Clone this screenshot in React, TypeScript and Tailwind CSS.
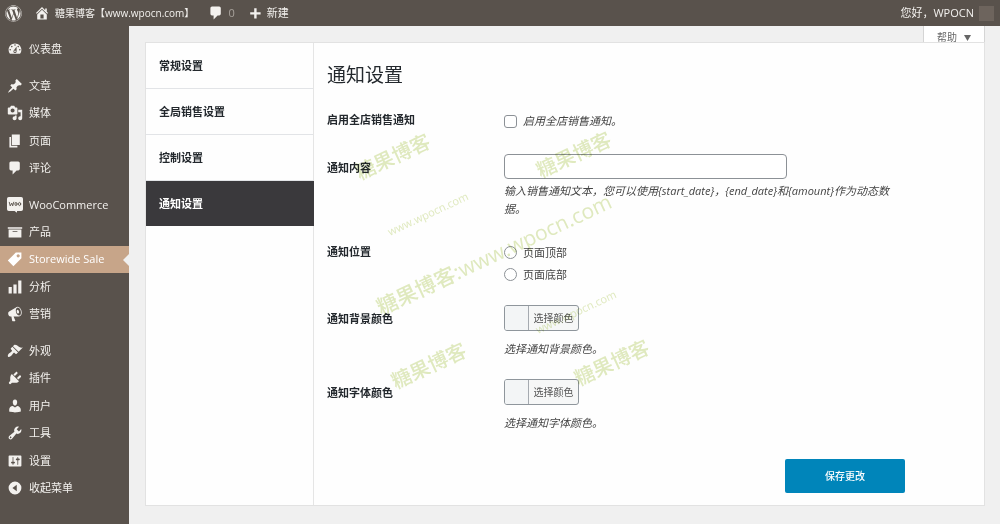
import type { ReactNode } from "react";
import { FaWordpress } from "react-icons/fa";

const icons = {
  dashboard:
    "M3.76 16h12.48c1.1-1.37 1.76-3.11 1.76-5 0-4.42-3.58-8-8-8s-8 3.58-8 8c0 1.89.66 3.63 1.76 5zM10 4c.55 0 1 .45 1 1s-.45 1-1 1-1-.45-1-1 .45-1 1-1zM6 6c.55 0 1 .45 1 1s-.45 1-1 1-1-.45-1-1 .45-1 1-1zm8 0c.55 0 1 .45 1 1s-.45 1-1 1-1-.45-1-1 .45-1 1-1zm-5.37 5.55L12 7v6c0 1.1-.9 2-2 2s-2-.9-2-2c0-.57.24-1.08.63-1.45zM4 10c.55 0 1 .45 1 1s-.45 1-1 1-1-.45-1-1 .45-1 1-1zm12 0c.55 0 1 .45 1 1s-.45 1-1 1-1-.45-1-1 .45-1 1-1zm-5 3c0-.55-.45-1-1-1s-1 .45-1 1 .45 1 1 1 1-.45 1-1z",
  post: "M10.44 3.02l1.82-1.82 6.36 6.35-1.83 1.82c-1.05-.68-2.48-.57-3.41.36l-.75.75c-.92.93-1.04 2.35-.35 3.41l-1.83 1.82-2.41-2.41-2.8 2.79c-.42.42-3.38 2.71-3.8 2.29s1.86-3.39 2.28-3.81l2.79-2.79L4.1 9.36l1.83-1.82c1.05.69 2.48.57 3.4-.36l.75-.75c.93-.92 1.05-2.35.36-3.41z",
  media:
    "M13 11V4c0-.55-.45-1-1-1h-1.67L9 1H5L3.67 3H2c-.55 0-1 .45-1 1v7c0 .55.45 1 1 1h10c.55 0 1-.45 1-1zM7 4.5c1.38 0 2.5 1.12 2.5 2.5S8.38 9.5 7 9.5 4.5 8.38 4.5 7 5.62 4.5 7 4.5zM14 6h5v10.5c0 1.38-1.12 2.5-2.5 2.5S14 17.88 14 16.5s1.12-2.5 2.5-2.5c.17 0 .34.02.5.05V9h-3V6zm-4 8.05V13h2v3.5c0 1.38-1.12 2.5-2.5 2.5S7 17.88 7 16.5 8.12 14 9.5 14c.17 0 .34.02.5.05z",
  page: "M6 15V2h10v13H6zm-1 1h8v2H3V5h2v11z",
  comments:
    "M5 2h9c1.1 0 2 .9 2 2v7c0 1.1-.9 2-2 2h-2l-5 5v-5H5c-1.1 0-2-.9-2-2V4c0-1.1.9-2 2-2z",
  archive: "M19 4v2H1V4h18zM2 7h16v10H2V7zm11 3V9H7v1h6z",
  tag: "M11 2h7v7L8 19l-7-7zm3 6c1.1 0 2-.9 2-2s-.9-2-2-2-2 .9-2 2 .9 2 2 2z",
  chart: "M18 18V2h-4v16h4zm-6 0V7H8v11h4zm-6 0v-8H2v8h4z",
  megaphone:
    "M18.15 5.94c.46 1.62.38 3.22-.02 4.48-.42 1.28-1.26 2.18-2.3 2.48-.16.06-.26.06-.4.06-.06.02-.12.02-.18.02-.06.02-.14.02-.22.02h-6.8l2.22 5.5c.02.14-.06.26-.14.34-.08.1-.24.16-.34.16H6.95c-.1 0-.26-.06-.34-.16-.08-.08-.16-.2-.14-.34l-1-5.5H4.25l-.02-.02c-.5.06-1.08-.18-1.54-.62s-.88-1.08-1.06-1.88c-.24-.8-.2-1.56-.02-2.2.18-.62.58-1.08 1.06-1.3l.02-.02 9-5.4c.1-.06.18-.1.24-.16.06-.04.14-.08.24-.12.16-.08.28-.12.5-.18 1.04-.3 2.24.1 3.22.98s1.84 2.24 2.26 3.86zm-2.58 5.98h-.02c.4-.1.74-.34 1.04-.7.58-.7.86-1.76.86-3.04 0-.64-.1-1.3-.28-1.98-.34-1.36-1.02-2.5-1.78-3.24s-1.68-1.1-2.46-.88c-.82.22-1.4.96-1.7 2-.32 1.04-.28 2.36.06 3.72.38 1.36 1 2.5 1.8 3.24.78.74 1.62 1.1 2.48.88zm-2.54-7.08c.22-.04.42-.02.62.04.38.16.76.48 1.02 1s.42 1.2.42 1.78c0 .3-.04.56-.12.8-.18.48-.44.84-.86.94-.34.1-.8-.06-1.14-.4s-.64-.86-.78-1.5c-.18-.62-.12-1.24.02-1.72s.48-.84.82-.94z",
  appearance:
    "M14.48 11.06L7.41 3.99l1.5-1.5c.5-.56 2.3-.47 3.51.32 1.21.8 1.43 1.28 2.91 2.1 1.18.64 2.45 1.26 4.45.85zm-.71.71L6.7 4.7 4.93 6.47c-.39.39-.39 1.02 0 1.41l1.06 1.06c.39.39.39 1.03 0 1.42-.6.6-1.43 1.11-2.21 1.69-.35.26-.7.53-1.01.84C1.43 14.23.4 16.08 1.4 17.07c.99 1 2.84-.03 4.18-1.36.31-.31.58-.66.85-1.02.57-.78 1.08-1.61 1.69-2.21.39-.39 1.02-.39 1.41 0l1.06 1.06c.39.39 1.02.39 1.41 0z",
  plugins:
    "M13.11 4.36L9.87 7.6 8 5.73l3.24-3.24c.35-.34 1.05-.2 1.56.32.52.51.66 1.21.31 1.55zm-8 1.77l.91-1.12 9.01 9.01-1.19.84c-.71.71-2.63 1.16-3.82 1.16H6.14L4.9 17.26c-.59.59-1.54.59-2.12 0-.59-.58-.59-1.53 0-2.12l1.24-1.24v-3.88c0-1.13.4-3.19 1.09-3.89zm7.26 3.97l3.24-3.24c.34-.35 1.04-.21 1.55.31.52.51.66 1.21.31 1.55l-3.24 3.25z",
  users:
    "M10 9.25c-2.27 0-2.73-3.44-2.73-3.44C7 4.02 7.82 2 9.97 2c2.16 0 2.98 2.02 2.71 3.81 0 0-.41 3.44-2.68 3.44zm0 2.57L12.72 10c2.39 0 4.52 2.33 4.52 4.53v2.49s-3.65 1.13-7.24 1.13c-3.65 0-7.24-1.13-7.24-1.13v-2.49c0-2.25 1.94-4.48 4.47-4.48z",
  tools:
    "M16.68 9.77c-1.34 1.34-3.3 1.67-4.95.99l-5.41 6.52c-.99.99-2.59.99-3.58 0s-.99-2.59 0-3.57l6.52-5.42c-.68-1.65-.35-3.61.99-4.95 1.28-1.28 3.12-1.62 4.72-1.06l-2.89 2.89 2.82 2.82 2.86-2.87c.53 1.58.18 3.39-1.08 4.65zM3.81 16.21c.4.39 1.04.39 1.43 0 .4-.4.4-1.04 0-1.43-.39-.4-1.03-.4-1.43 0-.39.39-.39 1.03 0 1.43z",
  settings:
    "M18 16V4c0-.55-.45-1-1-1H3c-.55 0-1 .45-1 1v12c0 .55.45 1 1 1h14c.55 0 1-.45 1-1zM8 11h1c.55 0 1 .45 1 1s-.45 1-1 1H8v1.5c0 .28-.22.5-.5.5s-.5-.22-.5-.5V13H6c-.55 0-1-.45-1-1s.45-1 1-1h1V5.5c0-.28.22-.5.5-.5s.5.22.5.5V11zm5-2h-1c-.55 0-1-.45-1-1s.45-1 1-1h1V5.5c0-.28.22-.5.5-.5s.5.22.5.5V7h1c.55 0 1 .45 1 1s-.45 1-1 1h-1v5.5c0 .28-.22.5-.5.5s-.5-.22-.5-.5V9z",
  collapse: "M10 2a8 8 0 1 0 0 16 8 8 0 0 0 0-16zm2.2 12.2L6.8 10l5.4-4.2z",
  home: "M16 8.5l1.53 1.53-1.06 1.06L10 4.6l-6.47 6.49-1.06-1.06L10 2.5l4 4v-2h2v4zm-6-2.46l6 5.99V18H4v-5.97zM12 17v-5H8v5h4z",
  plus: "M17 9v3h-5v5H9v-5H4V9h5V4h3v5h5z",
};

type IconName = keyof typeof icons;

function Icon({ name }: { name: IconName }) {
  return (
    <svg viewBox="0 0 20 20" className="size-4 shrink-0" fill="currentColor" fillRule="evenodd" aria-hidden="true">
      <path d={icons[name]} />
    </svg>
  );
}

function WooIcon() {
  return (
    <svg viewBox="0 0 16 16" className="size-4 shrink-0" aria-hidden="true">
      <path
        fill="currentColor"
        d="M1.8 0h12.4A1.8 1.8 0 0 1 16 1.8v10.4a1.8 1.8 0 0 1-1.8 1.8H10v1.8L7.600 14H1.800A1.800 1.800 0 0 1 0 12.200V1.800A1.800 1.800 0 0 1 1.800 0z"
      />
      <g fill="none" stroke="#59524c" strokeWidth="0.9" strokeLinejoin="round" strokeLinecap="round">
        <path d="M2.300 5.300l.9 3.600 1.600-2.800.9 2.800 1-3.700" />
        <ellipse cx="9" cy="7" rx="1.100" ry="1.600" />
        <ellipse cx="12.600" cy="7" rx="1.100" ry="1.600" />
      </g>
    </svg>
  );
}

type Item = { label: string; icon: IconName | "woo"; active?: boolean };

const contentItems: Item[] = [
  { label: "文章", icon: "post" },
  { label: "媒体", icon: "media" },
  { label: "页面", icon: "page" },
  { label: "评论", icon: "comments" },
];
const shopItems: Item[] = [
  { label: "WooCommerce", icon: "woo" },
  { label: "产品", icon: "archive" },
  { label: "Storewide Sale", icon: "tag", active: true },
  { label: "分析", icon: "chart" },
  { label: "营销", icon: "megaphone" },
];
const siteItems: Item[] = [
  { label: "外观", icon: "appearance" },
  { label: "插件", icon: "plugins" },
  { label: "用户", icon: "users" },
  { label: "工具", icon: "tools" },
  { label: "设置", icon: "settings" },
];

function MenuItem({ item }: { item: Item }) {
  return (
    <li className="flex">
      <a
        href="#"
        aria-current={item.active ? "page" : undefined}
        className={
          item.active
            ? "relative flex flex-1 items-center gap-[6px] bg-[#c7a589] pl-[7px] text-white"
            : "flex flex-1 items-center gap-[6px] pl-[7px]"
        }
      >
        {item.icon === "woo" ? <WooIcon /> : <Icon name={item.icon} />}
        <span>{item.label}</span>
        {item.active && (
          <svg viewBox="0 0 6 12" className="absolute top-2 right-0 h-3 w-[6px]" aria-hidden="true">
            <path d="M6 0v12L0 6z" fill="#f0f0f0" />
          </svg>
        )}
      </a>
    </li>
  );
}

function Row({ label, htmlFor, className, labelClass, children }: {
  label: string;
  htmlFor?: string;
  className: string;
  labelClass: string;
  children: ReactNode;
}) {
  return (
    <div className={`grid grid-cols-[177px_1fr] items-start ${className}`}>
      <label htmlFor={htmlFor} className={`font-semibold text-[#23282d] ${labelClass}`}>
        {label}
      </label>
      <div>{children}</div>
    </div>
  );
}

function ColorPicker({ id }: { id: string }) {
  return (
    <button
      id={id}
      type="button"
      className="flex h-[26px] w-[75px] overflow-hidden rounded-[3px] border border-[#8f969c] bg-[#f6f7f7] text-[10px] text-[#555]"
    >
      <span className="h-full w-6 border-r border-[#a5aab0] bg-[#f3f5f6]" />
      <span className="flex h-full flex-1 items-center justify-center">选择颜色</span>
    </button>
  );
}

const tabs = ["常规设置", "全局销售设置", "控制设置"];

function Watermarks() {
  const base = "absolute -translate-x-1/2 -translate-y-1/2 -rotate-[25deg] whitespace-nowrap";
  return (
    <div className="pointer-events-none absolute inset-0 overflow-hidden text-[#e0eabf] mix-blend-multiply select-none" aria-hidden="true">
      <span className={`${base} top-[114px] left-[247px] text-[20px] font-medium`}>糖果博客</span>
      <span className={`${base} top-[112px] left-[428px] text-[20px] font-medium`}>糖果博客</span>
      <span className={`${base} top-[171px] left-[282px] text-[11px]`}>www.wpocn.com</span>
      <span className={`${base} top-[211px] left-[348px] text-[21px] font-medium`}>糖果博客:www.wpocn.com</span>
      <span className={`${base} top-[269px] left-[430px] text-[11px]`}>www.wpocn.com</span>
      <span className={`${base} top-[323px] left-[283px] text-[20px] font-medium`}>糖果博客</span>
      <span className={`${base} top-[320px] left-[466px] text-[20px] font-medium`}>糖果博客</span>
    </div>
  );
}

export default function App() {
  return (
    <div className="flex min-h-screen flex-col bg-[#f0f0f0] font-['Open_Sans','Noto_Sans_CJK_SC',sans-serif] text-[11px] leading-[18px] text-[#444]">
      <header className="flex h-[26px] items-center bg-[#59524c] pr-[6px] pl-[5px] text-[#f3f1ee]">
        <a href="#" aria-label="WordPress">
          <FaWordpress className="size-[17px]" />
        </a>
        <a href="#" className="ml-3 flex items-center gap-[5px]">
          <Icon name="home" />
          <span className="text-[10px]">糖果博客【www.wpocn.com】</span>
        </a>
        <a href="#" className="ml-[14px] flex items-center gap-1">
          <Icon name="comments" />
          <span className="text-[#a8a29c]">0</span>
        </a>
        <a href="#" className="ml-3 flex items-center gap-1">
          <Icon name="plus" />
          <span>新建</span>
        </a>
        <a href="#" className="ml-auto flex items-center gap-[5px]">
          <span>您好，WPOCN</span>
          <span className="size-[15px] bg-[#6d645d]" />
        </a>
      </header>

      <div className="flex flex-1">
        <nav className="flex w-[129px] shrink-0 flex-col gap-[9px] bg-[#59524c] pt-[9px] text-[#f3f1ee]" aria-label="主菜单">
          <ul className="grid h-7 auto-rows-fr">
            <MenuItem item={{ label: "仪表盘", icon: "dashboard" }} />
          </ul>
          <ul className="grid h-[110px] auto-rows-fr">
            {contentItems.map((i) => <MenuItem key={i.label} item={i} />)}
          </ul>
          <ul className="grid h-[137px] auto-rows-fr">
            {shopItems.map((i) => <MenuItem key={i.label} item={i} />)}
          </ul>
          <ul className="grid h-[165px] auto-rows-fr">
            {siteItems.map((i) => <MenuItem key={i.label} item={i} />)}
            <li className="flex">
              <button type="button" className="flex flex-1 items-center gap-[6px] pl-[7px]">
                <Icon name="collapse" />
                <span>收起菜单</span>
              </button>
            </li>
          </ul>
        </nav>

        <main className="flex min-w-0 flex-1 flex-col pr-[15px] pb-[19px] pl-4">
          <button
            type="button"
            className="flex h-4 items-start gap-[7px] self-end overflow-hidden border-x border-[#d5d5d5] bg-white px-[13px] pt-[5px] text-[10px] leading-[13px] text-[#666]"
          >
            <span>帮助</span>
            <svg viewBox="0 0 7 6" className="mt-1 h-[6px] w-[7px]" fill="currentColor" aria-hidden="true">
              <path d="M0 0h7L3.500 6z" />
            </svg>
          </button>
          <div className="relative flex flex-1 border border-[#e2e2e2] bg-[#fefefe]">
            <aside className="w-[168px] shrink-0 border-r border-[#e5e5e5]">
              <ul className="font-semibold text-[#23282d]">
                {tabs.map((t) => (
                  <li key={t}>
                    <a href="#" className="flex h-[46px] items-center border-b border-[#e2e4e7] pl-[13px]">{t}</a>
                  </li>
                ))}
                <li>
                  <a href="#" aria-current="page" className="-mr-px flex h-[45px] items-center bg-[#3a393c] pl-[13px] text-white">通知设置</a>
                </li>
              </ul>
            </aside>

            <form className="flex min-w-0 flex-1 flex-col pt-5 pr-[79px] pb-3 pl-[13px]">
              <h1 className="text-[19px] leading-6 text-[#23282d]">通知设置</h1>
              <Row label="启用全店销售通知" htmlFor="enable" className="mt-[23px]" labelClass="pt-px">
                <label className="flex h-[20px] items-center gap-[6px] pt-[2px] italic">
                  <input id="enable" type="checkbox" className="size-[13px] appearance-none rounded-[3px] border border-[#8c9196] bg-white" />
                  <span>启用全店销售通知。</span>
                </label>
              </Row>
              <Row label="通知内容" htmlFor="content" className="mt-6" labelClass="pt-[5px]">
                <input id="content" type="text" className="block h-[25px] w-[283px] rounded-[4px] border border-[#8c9196] bg-white px-2" />
                <p className="mt-[3px] max-w-[390px] italic">
                  输入销售通知文本，您可以使用{"{start_date}"}，{"{end_date}"}和{"{amount}"}作为动态数据。
                </p>
              </Row>
              <Row label="通知位置" htmlFor="pos-top" className="mt-6" labelClass="pt-px">
                <div className="flex flex-col gap-px">
                  <label className="flex h-[21px] items-center gap-[6px]">
                    <input id="pos-top" type="radio" name="position" className="size-[13px] appearance-none rounded-full border border-[#8c9196] bg-white" />
                    <span>页面顶部</span>
                  </label>
                  <label className="flex h-[21px] items-center gap-[6px]">
                    <input type="radio" name="position" className="size-[13px] appearance-none rounded-full border border-[#8c9196] bg-white" />
                    <span>页面底部</span>
                  </label>
                </div>
              </Row>
              <Row label="通知背景颜色" htmlFor="bg-color" className="mt-5" labelClass="pt-[5px]">
                <ColorPicker id="bg-color" />
                <p className="mt-[9px] italic">选择通知背景颜色。</p>
              </Row>
              <Row label="通知字体颜色" htmlFor="font-color" className="mt-[21px]" labelClass="pt-[5px]">
                <ColorPicker id="font-color" />
                <p className="mt-[9px] italic">选择通知字体颜色。</p>
              </Row>
              <button type="submit" className="mt-[27px] h-[34px] w-[120px] self-end rounded-[2px] bg-[#0085ba] text-[10px] font-medium text-white">
                保存更改
              </button>
            </form>
            <Watermarks />
          </div>
        </main>
      </div>
    </div>
  );
}
